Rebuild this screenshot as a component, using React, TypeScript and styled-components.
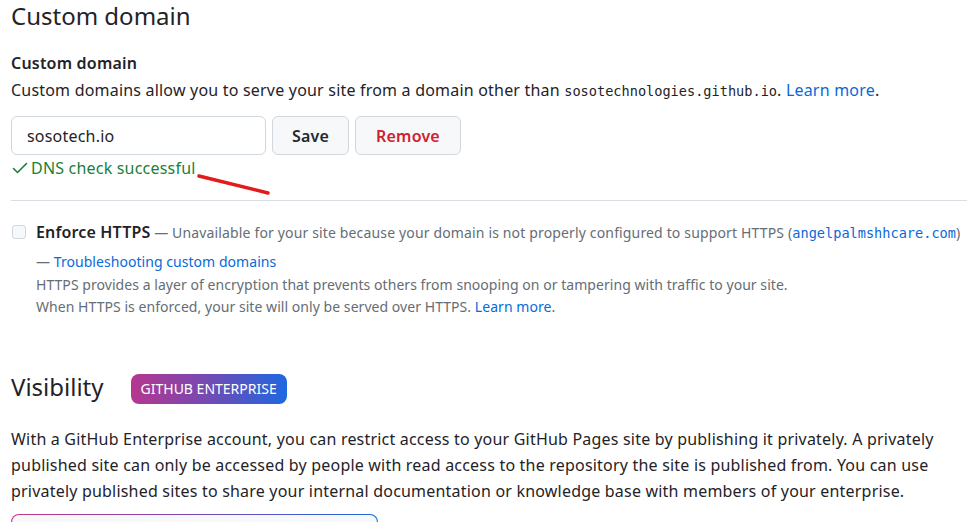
import React from "react";
import styled, { createGlobalStyle } from "styled-components";

const Global = createGlobalStyle`
  html, body { margin: 0; padding: 0; background: #ffffff; }
  body {
    font-family: "Noto Sans", "Open Sans", sans-serif;
    color: #1f2328;
    -webkit-font-smoothing: antialiased;
  }
`;

const Page = styled.div`
  width: 967px;
  height: 522px;
  overflow: hidden;
  padding-left: 11px;
  box-sizing: border-box;
`;

const SectionTitle = styled.h2<{ $top: number }>`
  margin: ${(p) => p.$top}px 0 0 0;
  font-size: 24px;
  font-weight: 400;
  line-height: 30px;
  color: #1f2328;
`;

const FieldLabel = styled.div`
  margin-top: 20px;
  font-size: 16px;
  font-weight: 600;
  line-height: 24px;
  letter-spacing: 0.2px;
`;

const Note = styled.p`
  margin: 3px 0 0 0;
  font-size: 16px;
  line-height: 24px;
  letter-spacing: 0.2px;
  color: #1f2328;
`;

const Code = styled.code<{ $blue?: boolean }>`
  font-family: "DejaVu Sans Mono", "Liberation Mono", monospace;
  font-size: 13.6px;
  letter-spacing: 0;
  color: ${(p) => (p.$blue ? "#0969da" : "#1f2328")};
`;

const Link = styled.a`
  color: #0969da;
  text-decoration: none;
`;

const FormRow = styled.div`
  display: flex;
  gap: 6px;
  margin-top: 13px;
  height: 39px;
`;

const Input = styled.input`
  width: 255px;
  box-sizing: border-box;
  height: 39px;
  border: 1px solid #d0d7de;
  border-radius: 6px;
  padding: 0 15px;
  font-family: inherit;
  font-size: 16px;
  letter-spacing: 0.2px;
  color: #1f2328;
  background: #ffffff;
  outline: none;
`;

const Button = styled.button<{ $danger?: boolean; $w: number }>`
  width: ${(p) => p.$w}px;
  height: 39px;
  box-sizing: border-box;
  border: 1px solid #d0d7de;
  border-radius: 6px;
  background: #f6f8fa;
  font-family: inherit;
  font-size: 16px;
  font-weight: 600;
  letter-spacing: 0.2px;
  color: ${(p) => (p.$danger ? "#cf222e" : "#24292f")};
  padding: 0;
`;

const Success = styled.div`
  position: relative;
  display: flex;
  align-items: center;
  gap: 2px;
  margin-top: 1px;
  height: 24px;
  font-size: 16px;
  letter-spacing: 0.2px;
  color: #1a7f37;
`;

const Annotation = styled.svg`
  position: absolute;
  left: 174px;
  top: 19px;
  overflow: visible;
`;

const Divider = styled.hr`
  margin: 20px 0 0 0;
  border: 0;
  border-top: 1px solid #d8dee4;
  height: 0;
`;

const CheckRow = styled.div`
  display: flex;
  align-items: flex-start;
  gap: 10px;
  margin-top: 20px;
`;

const Box = styled.span`
  flex: none;
  width: 14px;
  height: 14px;
  margin: 4px 0 0 1px;
  border: 1px solid #d0d7de;
  border-radius: 3px;
  background: #f6f8fa;
  box-sizing: border-box;
`;

const CheckBody = styled.div`
  flex: 1;
`;

const CheckTitle = styled.div`
  font-size: 14px;
  line-height: 22px;
  letter-spacing: 0.15px;
  color: #656d76;
  white-space: nowrap;
`;

const Strong = styled.span`
  font-size: 16px;
  font-weight: 600;
  color: #1f2328;
`;

const Hint = styled.div<{ $top?: number }>`
  margin-top: ${(p) => p.$top ?? 0}px;
  font-size: 14px;
  line-height: 22.5px;
  letter-spacing: 0.05px;
  color: #656d76;
`;

const TitleRow = styled.div`
  display: flex;
  align-items: center;
  gap: 27px;
  margin-top: 52px;
`;

const Badge = styled.span`
  display: inline-flex;
  align-items: center;
  height: 30px;
  margin-top: 3px;
  padding: 0 10px;
  border-radius: 8px;
  background: linear-gradient(90deg, #b5378f 0%, #7a48b0 45%, #1d68e0 100%);
  color: #ffffff;
  font-size: 14px;
  font-weight: 400;
`;

const Para = styled.p`
  margin: 22px 0 0 0;
  font-size: 16px;
  line-height: 26px;
  letter-spacing: 0.2px;
  color: #1f2328;
`;

const GradientBox = styled.div`
  margin-top: 10px;
  width: 367px;
  height: 40px;
  border-radius: 8px;
  padding: 1px;
  box-sizing: border-box;
  background: linear-gradient(90deg, #c13584 0%, #7a48b0 50%, #1d68e0 100%);
`;

const GradientInner = styled.div`
  height: 100%;
  border-radius: 7px;
  background: #f6f8fa;
`;

const CheckIcon = () => (
  <svg width="18" height="16" viewBox="0 0 18 16" fill="none">
    <path d="M2.5 8.5 L6.5 12.5 L15.5 3.5" stroke="#1a7f37" strokeWidth="1.6" strokeLinecap="round" strokeLinejoin="round" />
  </svg>
);

export default function App() {
  return (
    <>
      <Global />
      <Page>
        <SectionTitle $top={1}>Custom domain</SectionTitle>
        <FieldLabel>Custom domain</FieldLabel>
        <Note>
          Custom domains allow you to serve your site from a domain other than <Code>sosotechnologies.github.io</Code>.{" "}
          <Link>Learn more</Link>.
        </Note>
        <FormRow>
          <Input defaultValue="sosotech.io" />
          <Button $w={77}>Save</Button>
          <Button $w={106} $danger>Remove</Button>
        </FormRow>
        <Success>
          <CheckIcon />
          DNS check successful
          <Annotation width="80" height="24">
            <path d="M14 1 L83 18" stroke="#e31b1b" strokeWidth="3.5" strokeLinecap="round" />
          </Annotation>
        </Success>
        <Divider />
        <CheckRow>
          <Box />
          <CheckBody>
            <CheckTitle>
              <Strong>Enforce HTTPS</Strong> — Unavailable for your site because your domain is not properly configured to support HTTPS (
              <Code $blue>angelpalmshhcare.com</Code>)
            </CheckTitle>
            <Hint $top={7}>
              — <Link>Troubleshooting custom domains</Link>
            </Hint>
            <Hint>HTTPS provides a layer of encryption that prevents others from snooping on or tampering with traffic to your site.</Hint>
            <Hint>
              When HTTPS is enforced, your site will only be served over HTTPS. <Link>Learn more</Link>.
            </Hint>
          </CheckBody>
        </CheckRow>
        <TitleRow>
          <SectionTitle $top={0}>Visibility</SectionTitle>
          <Badge>GITHUB ENTERPRISE</Badge>
        </TitleRow>
        <Para>
          With a GitHub Enterprise account, you can restrict access to your GitHub Pages site by publishing it privately. A privately
          <br />
          published site can only be accessed by people with read access to the repository the site is published from. You can use
          <br />
          privately published sites to share your internal documentation or knowledge base with members of your enterprise.
        </Para>
        <GradientBox>
          <GradientInner />
        </GradientBox>
      </Page>
    </>
  );
}
